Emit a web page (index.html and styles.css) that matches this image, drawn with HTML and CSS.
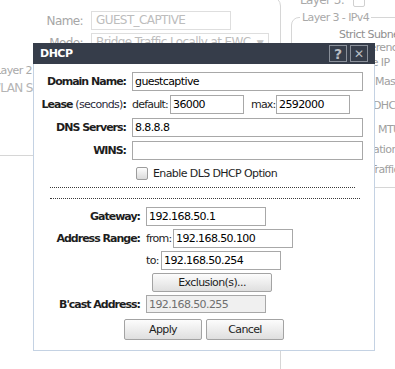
FILE: index.html
```html
<!DOCTYPE html>
<html lang="en">
<head>
    <meta charset="UTF-8">
    <meta name="viewport" content="width=device-width, initial-scale=1.0">
    <title>DHCP</title>
    <link rel="stylesheet" href="styles.css">
</head>
<body>
    <div class="page">
        <div class="left-pane">
            <fieldset class="wlan-box">
                <legend>Hardware</legend>
                <div class="bg-row">
                    <span class="bg-label">Name:</span>
                    <span class="bg-input">GUEST_CAPTIVE</span>
                </div>
                <div class="bg-row">
                    <span class="bg-label">Mode:</span>
                    <span class="bg-input bg-select">Bridge Traffic Locally at EWC <span class="arrow">▼</span></span>
                </div>
                <fieldset class="layer2">
                    <legend>Layer 2 -</legend>
                    <div class="l2-row">WLAN Security</div>
                </fieldset>
            </fieldset>
        </div>

        <div class="right-pane">
            <div class="l3-head">Layer 3: <span class="bg-check"></span></div>
            <fieldset class="layer3">
                <legend>Layer 3 - IPv4</legend>
                <div class="l3-row">Strict Subnet</div>
                <div class="l3-row">Adherence</div>
                <div class="l3-row">Interface IP</div>
                <div class="l3-row">Mask</div>
                <div class="l3-row">DHCP</div>
                <div class="l3-row">MTU</div>
                <div class="l3-row">Configuration</div>
                <div class="l3-row">Traffic</div>
            </fieldset>
        </div>
    </div>

    <!-- DHCP popup -->
    <div class="dialog">
        <div class="dialog-title">
            <span class="title-text">DHCP</span>
            <span class="title-btn">?</span>
            <span class="title-btn">✕</span>
        </div>

        <div class="dialog-body">
            <div class="form-top">
                <label>Domain Name:</label>
                <input class="field wide" type="text" value="guestcaptive">

                <label>Lease <span class="unit">(seconds)</span>:</label>
                <div class="inline">
                    <span class="tag-default">default:</span>
                    <input class="field short" type="text" value="36000">
                    <span class="tag-max">max:</span>
                    <input class="field short" type="text" value="2592000">
                </div>

                <label>DNS Servers:</label>
                <input class="field wide" type="text" value="8.8.8.8">

                <label>WINS:</label>
                <input class="field wide" type="text" value="">

                <div class="check-row">
                    <input class="check" type="checkbox">
                    <span>Enable DLS DHCP Option</span>
                </div>
            </div>

            <div class="dots dots-1"></div>
            <div class="dots dots-2"></div>

            <div class="form-bottom">
                <label>Gateway:</label>
                <input class="field mid" type="text" value="192.168.50.1">

                <label>Address Range:</label>
                <div class="inline">
                    <span class="tag-from">from:</span>
                    <input class="field mid" type="text" value="192.168.50.100">
                </div>

                <span></span>
                <div class="inline">
                    <span class="tag-to">to:</span>
                    <input class="field mid" type="text" value="192.168.50.254">
                </div>

                <span></span>
                <button class="btn excl">Exclusion(s)...</button>

                <label>B'cast Address:</label>
                <input class="field mid bcast" type="text" value="192.168.50.255" disabled>
            </div>

            <div class="actions">
                <button class="btn">Apply</button>
                <button class="btn">Cancel</button>
            </div>
        </div>
    </div>
</body>
</html>
```

FILE: styles.css
```css
body, html {
    margin: 0;
    padding: 0;
    width: 395px;
    height: 369px;
    overflow: hidden;
    background-color: #fff;
    font-family: "DejaVu Sans", Verdana, sans-serif;
    font-size: 11px;
    letter-spacing: -0.6px;
}

/* faded page behind the popup */
.page {
    display: flex;
    height: 369px;
    overflow: hidden;
    color: #a9a9a9;
}

.left-pane {
    flex: none;
    width: 281px;
}

.wlan-box {
    box-sizing: border-box;
    width: 331px;
    height: 400px;
    margin: -10px 0 0 -50px;
    padding: 8px 0 0 10px;
    border: 1px solid #d6d6d6;
    border-radius: 10px;
}

.wlan-box legend,
.layer2 legend,
.layer3 legend {
    padding: 0 2px;
    line-height: 13px;
}

.bg-row {
    display: flex;
    align-items: center;
    height: 19px;
    margin-bottom: 3px;
}

.bg-label {
    width: 130px;
    padding-right: 8px;
    box-sizing: border-box;
    text-align: right;
    font-size: 12px;
    color: #a6a6a6;
}

.bg-input {
    box-sizing: border-box;
    width: 140px;
    height: 19px;
    line-height: 17px;
    padding-left: 4px;
    border: 1px solid #dedede;
    color: #bdbdbd;
    font-size: 12px;
}

.bg-select {
    width: 178px;
    white-space: nowrap;
    overflow: hidden;
}

.bg-select .arrow {
    font-size: 9px;
    margin-left: 3px;
    color: #c4c4c4;
}

.layer2 {
    box-sizing: border-box;
    width: 200px;
    height: 92px;
    margin: 12px 0 0 14px;
    padding: 0 0 0 17px;
    border: 1px solid #d6d6d6;
    border-radius: 6px;
}

.l2-row {
    margin: 5px 0 0 -4px;
    line-height: 13px;
    font-size: 12px;
    color: #b4b4b4;
}

.right-pane {
    flex: none;
    width: 114px;
}

.l3-head {
    display: flex;
    align-items: center;
    margin-top: -6px;
    padding-left: 19px;
    line-height: 13px;
    font-size: 12px;
    white-space: nowrap;
}

.bg-check {
    display: inline-block;
    width: 10px;
    height: 10px;
    margin-left: 9px;
    border: 1px solid #d0d0d0;
    border-radius: 2px;
}

.layer3 {
    box-sizing: border-box;
    width: 220px;
    height: 177px;
    margin: 4px 0 0 10px;
    padding: 0 0 0 8px;
    border: 1px solid #d6d6d6;
    border-radius: 8px;
}

.l3-row {
    line-height: 12px;
    font-size: 11px;
    white-space: nowrap;
    color: #a0a0a0;
}

.l3-row:nth-of-type(1) { margin-top: 5px; padding-left: 39px; color: #8f8f8f; }
.l3-row:nth-of-type(2) { margin-top: 1px; padding-left: 50px; }
.l3-row:nth-of-type(3) { margin-top: 3px; padding-left: 34px; }
.l3-row:nth-of-type(4) { margin-top: 7px; padding-left: 75px; }
.l3-row:nth-of-type(5) { margin-top: 12px; padding-left: 73px; }
.l3-row:nth-of-type(6) { margin-top: 12px; padding-left: 78px; }
.l3-row:nth-of-type(7) { margin-top: 8px; padding-left: 31px; }
.l3-row:nth-of-type(8) { margin-top: 8px; padding-left: 70px; }

/* popup */
.dialog {
    position: absolute;
    top: 43px;
    left: 33px;
    width: 342px;
    height: 308px;
    box-sizing: border-box;
    background-color: #fff;
    border: 1px solid #c4d2e3;
    border-top: none;
    color: #1e1e1e;
}

.dialog-title {
    display: flex;
    align-items: center;
    height: 21px;
    margin: 0 -1px;
    padding: 0 7px 0 7px;
    background-color: #363d4a;
    color: #fff;
    font-weight: bold;
    letter-spacing: -0.5px;
}

.title-text {
    flex: 1;
}

.title-btn {
    display: flex;
    justify-content: center;
    align-items: center;
    box-sizing: border-box;
    width: 18px;
    height: 17px;
    margin-left: 3px;
    border: 1px solid #8a909a;
    color: #b8bcc3;
    font-size: 14px;
    font-weight: bold;
    letter-spacing: 0;
}

.title-btn:last-child {
    font-size: 12px;
}

.dialog-body {
    padding-top: 8px;
}

.form-top,
.form-bottom {
    display: grid;
    align-items: center;
    column-gap: 6px;
}

.form-top {
    grid-template-columns: 92px 1fr;
    row-gap: 4px;
}

.form-bottom {
    grid-template-columns: 106px 1fr;
    row-gap: 3px;
    margin-top: 8px;
}

label {
    text-align: right;
    font-weight: bold;
    letter-spacing: -1px;
    white-space: nowrap;
}

label .unit {
    font-weight: normal;
    letter-spacing: -0.7px;
    color: #2b2b3a;
}

.inline {
    display: flex;
    align-items: center;
    gap: 3px;
    white-space: nowrap;
}

.tag-default {
    width: 35px;
    letter-spacing: -0.8px;
}

.tag-max {
    width: 22px;
    margin-left: 4px;
    letter-spacing: -0.8px;
}

.form-bottom .inline {
    gap: 4px;
}

.tag-from {
    width: 23px;
    letter-spacing: -0.8px;
}

.tag-to {
    width: 11px;
}

.field {
    box-sizing: border-box;
    height: 19px;
    margin: 0;
    padding: 0 2px;
    border: 1px solid #a8a8a8;
    border-radius: 0;
    font: inherit;
    letter-spacing: inherit;
    color: #000;
    background-color: #fff;
    outline: none;
}

.field.wide {
    width: 231px;
}

.field.short {
    width: 74px;
}

.field.mid {
    width: 120px;
}

.field.bcast {
    height: 18px;
    background-color: #f0f0f0;
    color: #6f6f6f;
}

.check-row {
    grid-column: 2;
    display: flex;
    align-items: center;
    height: 19px;
}

.check {
    appearance: none;
    box-sizing: border-box;
    width: 12px;
    height: 13px;
    margin: 0 5px 0 4px;
    border: 1px solid #9c9c9c;
    border-radius: 2px;
    background: linear-gradient(#fdfdfd, #dadada);
}

.dots {
    height: 0;
    border-top: 1px dotted #3a3a3a;
    margin-left: 16px;
}

.dots-1 {
    width: 305px;
    margin-top: 4px;
}

.dots-2 {
    width: 310px;
    margin-top: 10px;
}

.btn {
    box-sizing: border-box;
    height: 19px;
    margin: 0;
    padding: 0;
    border: 1px solid #a3a3a3;
    border-radius: 2px;
    background: linear-gradient(#fcfcfc, #dfdfdf);
    font: inherit;
    letter-spacing: inherit;
    color: #1e1e1e;
}

.btn.excl {
    width: 120px;
    margin-left: 6px;
}

.actions {
    display: flex;
    justify-content: center;
    gap: 4px;
    margin-top: 6px;
}

.actions .btn {
    width: 78px;
    height: 21px;
}
```
